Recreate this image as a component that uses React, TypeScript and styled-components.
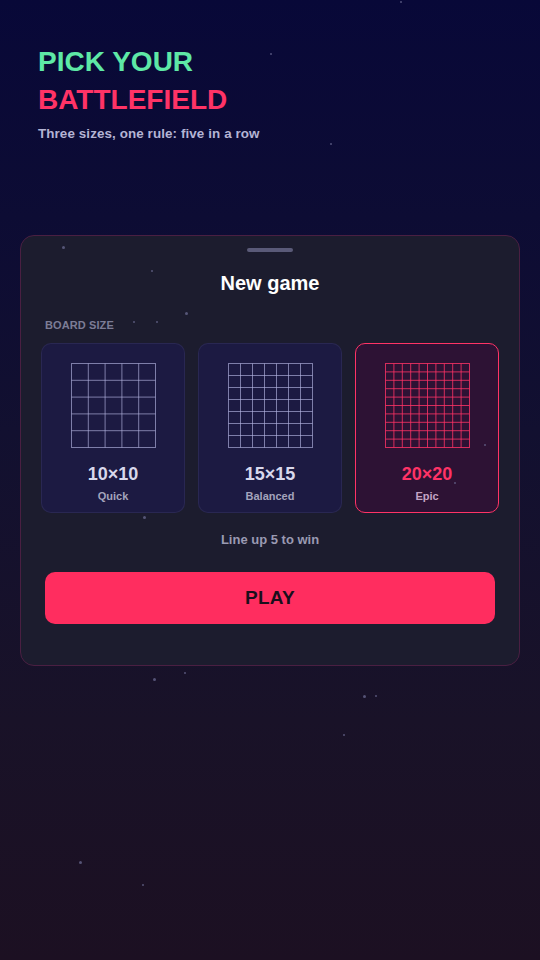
import styled, { createGlobalStyle, css } from "styled-components";

const GlobalStyle = createGlobalStyle`
    html, body {
        margin: 0;
        padding: 0;
        background: #1c1022;
    }
    * { box-sizing: border-box; }
`;

const STPage = styled.div`
    position: relative;
    width: 540px;
    min-height: 960px;
    overflow: hidden;
    padding: 43px 20px 0;
    font-family: "Liberation Sans", Arial, sans-serif;
    background: linear-gradient(180deg, #080838 0%, #121030 45%, #191228 75%, #1c1022 100%);
`;

const STStar = styled.span<{ $size: number }>`
    position: absolute;
    z-index: 2;
    pointer-events: none;
    width: ${p => p.$size}px;
    height: ${p => p.$size}px;
    border-radius: 50%;
    background: #6a6a90;
    opacity: 0.75;
`;

const STHeader = styled.header`
    position: relative;
    padding-left: 18px;
    margin-bottom: 92px;
`;

const STHeadline = styled.h1<{ $color: string }>`
    margin: 0;
    font-size: 28px;
    line-height: 38px;
    font-weight: 700;
    color: ${p => p.$color};
`;

const STSubtitle = styled.p`
    margin: 6px 0 0;
    font-size: 13.4px;
    line-height: 18px;
    font-weight: 700;
    letter-spacing: 0.1px;
    color: #b4b4d4;
`;

const STSheet = styled.section`
    position: relative;
    display: flex;
    flex-direction: column;
    padding: 12px 24px 41px;
    background: #1c1c2e;
    border: 1px solid #4a1f42;
    border-radius: 14px;
`;

const STHandle = styled.div`
    align-self: center;
    width: 46px;
    height: 4px;
    border-radius: 2px;
    background: #5a5a78;
`;

const STTitle = styled.h2`
    margin: 19px 0 0;
    text-align: center;
    font-size: 20px;
    line-height: 24px;
    font-weight: 700;
    color: #ffffff;
`;

const STLabel = styled.div`
    margin-top: 23px;
    font-size: 11px;
    line-height: 14px;
    font-weight: 700;
    color: #7c7c96;
    letter-spacing: 0.1px;
`;

const STOptions = styled.div`
    display: grid;
    grid-template-columns: repeat(3, 144px);
    gap: 13px;
    margin: 11px -4px 0;
`;

const STOption = styled.button<{ $active: boolean }>`
    display: flex;
    flex-direction: column;
    align-items: center;
    height: 170px;
    padding: 19px 0 0;
    border-radius: 10px;
    border: 1px solid rgba(140, 140, 200, 0.12);
    background: #1c1a42;
    font-family: inherit;
    cursor: pointer;
    ${p => p.$active && css`
        background: #2d1234;
        border: 1.5px solid #ff3366;
    `};
`;

const STValue = styled.div<{ $active: boolean }>`
    margin-top: 15px;
    font-size: 18px;
    line-height: 22px;
    font-weight: 700;
    color: ${p => (p.$active ? "#ff3366" : "#d8d8ec")};
`;

const STCaption = styled.div<{ $active: boolean }>`
    margin-top: 4px;
    font-size: 11px;
    line-height: 14px;
    font-weight: 700;
    color: ${p => (p.$active ? "#c4a4c4" : "#a4a4bc")};
`;

const STHint = styled.div`
    margin-top: 19px;
    text-align: center;
    font-size: 13px;
    line-height: 16px;
    font-weight: 700;
    color: #9a9ab2;
`;

const STPlay = styled.button`
    margin-top: 24px;
    height: 52px;
    border: none;
    border-radius: 10px;
    background: #ff2d5f;
    font-family: inherit;
    font-size: 19px;
    font-weight: 700;
    color: #1a0f1c;
    letter-spacing: 0.3px;
    cursor: pointer;
`;

const BoardGrid = ({ cells, active }: { cells: number; active: boolean }) => {
    const size = 84;
    const step = size / cells;
    const stroke = active ? "rgba(255, 51, 102, 0.8)" : "rgba(180, 180, 225, 0.65)";
    const lines = [];
    for (let i = 1; i < cells; i++) {
        const v = i * step;
        lines.push(<line key={`v${i}`} x1={v} y1={0} x2={v} y2={size} />);
        lines.push(<line key={`h${i}`} x1={0} y1={v} x2={size} y2={v} />);
    }
    return (
        <svg width={size + 1} height={size + 1} viewBox={`-0.5 -0.5 ${size + 1} ${size + 1}`}>
            <g stroke={stroke} strokeWidth={1} fill="none">
                <rect x={0} y={0} width={size} height={size} />
                {lines}
            </g>
        </svg>
    );
};

const stars: [number, number, number][] = [
    [400, 1, 2], [270, 53, 2], [330, 143, 2], [62, 246, 3], [151, 270, 2],
    [185, 312, 3], [133, 321, 2], [156, 321, 2], [484, 444, 2], [454, 482, 2],
    [143, 516, 3], [153, 678, 3], [184, 672, 2], [363, 695, 3], [343, 734, 2],
    [375, 695, 2], [79, 861, 3], [142, 884, 2],
];

const sizes = [
    { value: "10×10", caption: "Quick", cells: 5 },
    { value: "15×15", caption: "Balanced", cells: 7 },
    { value: "20×20", caption: "Epic", cells: 10 },
];

const App = (): JSX.Element => {
    const selected = 2;
    return (
        <STPage>
            <GlobalStyle />
            {stars.map(([x, y, s], i) => (
                <STStar key={i} $size={s} style={{ left: x, top: y }} />
            ))}
            <STHeader>
                <STHeadline $color="#5ee8a6">PICK YOUR</STHeadline>
                <STHeadline $color="#ff3366">BATTLEFIELD</STHeadline>
                <STSubtitle>Three sizes, one rule: five in a row</STSubtitle>
            </STHeader>
            <STSheet>
                <STHandle />
                <STTitle>New game</STTitle>
                <STLabel>BOARD SIZE</STLabel>
                <STOptions>
                    {sizes.map((s, idx) => {
                        const active = idx === selected;
                        return (
                            <STOption key={s.value} $active={active}>
                                <BoardGrid cells={s.cells} active={active} />
                                <STValue $active={active}>{s.value}</STValue>
                                <STCaption $active={active}>{s.caption}</STCaption>
                            </STOption>
                        );
                    })}
                </STOptions>
                <STHint>Line up 5 to win</STHint>
                <STPlay>PLAY</STPlay>
            </STSheet>
        </STPage>
    );
};

export default App;
